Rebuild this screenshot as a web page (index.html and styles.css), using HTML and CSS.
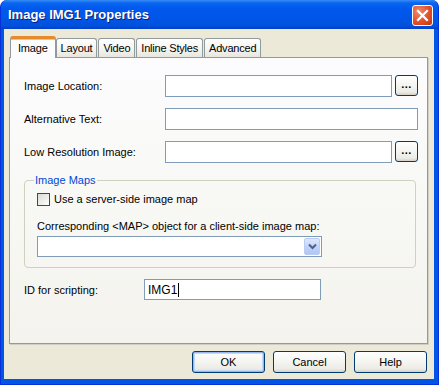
FILE: index.html
```html
<!DOCTYPE html>
<html lang="en">
<head>
    <meta charset="UTF-8">
    <title>Image IMG1 Properties</title>
    <link rel="stylesheet" href="styles.css">
</head>
<body>
    <div class="window">
        <div class="titlebar">
            <span class="title">Image IMG1 Properties</span>
            <div class="close-btn">
                <svg width="13" height="13" viewBox="0 0 13 13">
                    <path d="M2 2 L11 11 M11 2 L2 11" stroke="#fff" stroke-width="2.2" stroke-linecap="square"/>
                </svg>
            </div>
        </div>

        <div class="client">
            <div class="tabs">
                <div class="tab selected">Image</div>
                <div class="tab">Layout</div>
                <div class="tab">Video</div>
                <div class="tab">Inline Styles</div>
                <div class="tab">Advanced</div>
            </div>

            <div class="panel">
                <div class="fields">
                    <div class="row">
                        <label class="label">Image Location:</label>
                        <div class="input"></div>
                        <div class="btn browse">...</div>
                    </div>
                    <div class="row">
                        <label class="label">Alternative Text:</label>
                        <div class="input"></div>
                    </div>
                    <div class="row">
                        <label class="label">Low Resolution Image:</label>
                        <div class="input"></div>
                        <div class="btn browse">...</div>
                    </div>
                </div>

                <fieldset class="group">
                    <legend>Image Maps</legend>
                    <div class="check-row">
                        <span class="checkbox"></span>
                        <span>Use a server-side image map</span>
                    </div>
                    <div class="map-label">Corresponding &lt;MAP&gt; object for a client-side image map:</div>
                    <div class="combo">
                        <div class="combo-btn">
                            <svg width="9" height="7" viewBox="0 0 9 7">
                                <path d="M1 1.5 L4.5 5 L8 1.5" fill="none" stroke="#4d6185" stroke-width="2"/>
                            </svg>
                        </div>
                    </div>
                </fieldset>

                <div class="row id-row">
                    <label class="label id-label">ID for scripting:</label>
                    <div class="input id-input">IMG1<span class="caret"></span></div>
                </div>
            </div>

            <div class="actions">
                <div class="btn action default">OK</div>
                <div class="btn action">Cancel</div>
                <div class="btn action">Help</div>
            </div>
        </div>
    </div>
</body>
</html>
```

FILE: styles.css
```css
* {
    margin: 0;
    padding: 0;
    box-sizing: border-box;
}

body {
    font-family: 'Liberation Sans', Arial, sans-serif;
    font-size: 11px;
    color: #000;
    background: #fff;
}

.window {
    width: 439px;
    height: 385px;
    display: flex;
    flex-direction: column;
    background: #0055e5;
    border-radius: 7px 7px 0 0;
    padding: 0 4px 5px 3px;
    border-left: 1px solid #0831d9;
    border-right: 1px solid #0831d9;
    border-bottom: 1px solid #0831d9;
}

.titlebar {
    height: 29px;
    margin: 0 -4px 0 -3px;
    padding: 0 5px 0 7px;
    display: flex;
    align-items: center;
    justify-content: space-between;
    border-radius: 7px 7px 0 0;
    background: linear-gradient(to bottom, #3b8cf5 0%, #0866f0 10%, #0058ee 30%, #0055e5 70%, #0050dc 90%, #003fc4 100%);
}

.title {
    color: #fff;
    font-weight: bold;
    font-size: 13px;
    text-shadow: 1px 1px 0 #0a1f7a;
    padding-bottom: 1px;
}

.close-btn {
    width: 21px;
    height: 21px;
    border: 1px solid #fff;
    border-radius: 3px;
    background: radial-gradient(circle at 30% 30%, #f08a6a 0%, #e0502c 55%, #c2360e 100%);
    display: flex;
    align-items: center;
    justify-content: center;
    margin-top: 2px;
}

.client {
    flex: 1;
    background: #ece9d8;
    padding: 7px 7px 6px 5px;
    display: flex;
    flex-direction: column;
}

.tabs {
    display: flex;
    align-items: flex-end;
    height: 21px;
    padding-left: 1px;
    position: relative;
    z-index: 1;
}

.tab {
    height: 19px;
    padding: 0 4px;
    margin-right: 1px;
    border: 1px solid #919b9c;
    border-bottom: none;
    border-radius: 3px 3px 0 0;
    background: linear-gradient(to bottom, #ffffff 0%, #f3f3ef 60%, #e8e6dd 100%);
    display: flex;
    align-items: center;
    white-space: nowrap;
    letter-spacing: -0.2px;
}

.tab.selected {
    height: 22px;
    margin-bottom: -1px;
    margin-right: 0;
    padding: 0 7px;
    border-top: 3px solid #e68b2c;
    background: #fcfcfe;
    box-shadow: inset 0 1px 0 #ffc73c;
    padding-bottom: 2px;
}

.panel {
    height: 287px;
    border: 1px solid #919b9c;
    box-shadow: 1px 1px 0 #d0cec2;
    background: linear-gradient(to bottom, #fcfcfe 0%, #f7f7f3 60%, #f4f3ee 100%);
    padding: 16px 9px 0 14px;
    width: 419px;
}

.fields {
    display: flex;
    flex-direction: column;
    gap: 10px;
}

.row {
    display: flex;
    align-items: center;
    height: 23px;
}

.label {
    width: 141px;
    flex-shrink: 0;
}

.input {
    flex: 1;
    height: 22px;
    background: #fff;
    border: 1px solid #7f9db9;
}

.btn {
    border: 1px solid #003c74;
    border-radius: 3px;
    background: linear-gradient(to bottom, #ffffff 0%, #f4f4f0 50%, #ecebe6 85%, #d6d0c5 100%);
    display: flex;
    align-items: center;
    justify-content: center;
}

.browse {
    width: 23px;
    height: 21px;
    margin-left: 3px;
    font-weight: bold;
    padding-bottom: 4px;
    letter-spacing: 0.5px;
}

.group {
    margin-top: 11px;
    width: 392px;
    border: 1px solid #d0d0bf;
    border-radius: 4px;
    padding: 5px 12px 10px 12px;
}

.group legend {
    color: #0046d5;
    padding: 0 1px;
    margin-left: -3px;
    line-height: 13px;
}

.check-row {
    display: flex;
    align-items: center;
    gap: 4px;
    height: 14px;
}

.checkbox {
    width: 13px;
    height: 13px;
    border: 1px solid #1c5180;
    background: linear-gradient(135deg, #dcdcd7 0%, #f0f0ea 60%, #ffffff 100%);
}

.map-label {
    margin-top: 14px;
    line-height: 13px;
}

.combo {
    margin-top: 3px;
    width: 285px;
    height: 21px;
    background: #fff;
    border: 1px solid #7f9db9;
    display: flex;
    justify-content: flex-end;
    padding: 1px;
}

.combo-btn {
    width: 16px;
    height: 17px;
    border-radius: 2px;
    border: 1px solid #b9cdf6;
    background: linear-gradient(to bottom, #dde8fd 0%, #c3d4fa 50%, #b1c6f6 100%);
    display: flex;
    align-items: center;
    justify-content: center;
}

.id-row {
    margin-top: 10px;
    width: 297px;
}

.id-label {
    width: 120px;
}

.id-input {
    height: 21px;
    display: flex;
    align-items: center;
    padding-left: 3px;
    font-size: 12px;
}

.caret {
    width: 1px;
    height: 14px;
    background: #000;
    margin-left: 1px;
}

.actions {
    margin-top: auto;
    display: flex;
    justify-content: flex-end;
    gap: 8px;
}

.action {
    width: 73px;
    height: 22px;
}

.action.default {
    box-shadow: inset 0 0 0 1px #98b8ea, inset 0 0 0 2px #c6d8f7;
}
```
